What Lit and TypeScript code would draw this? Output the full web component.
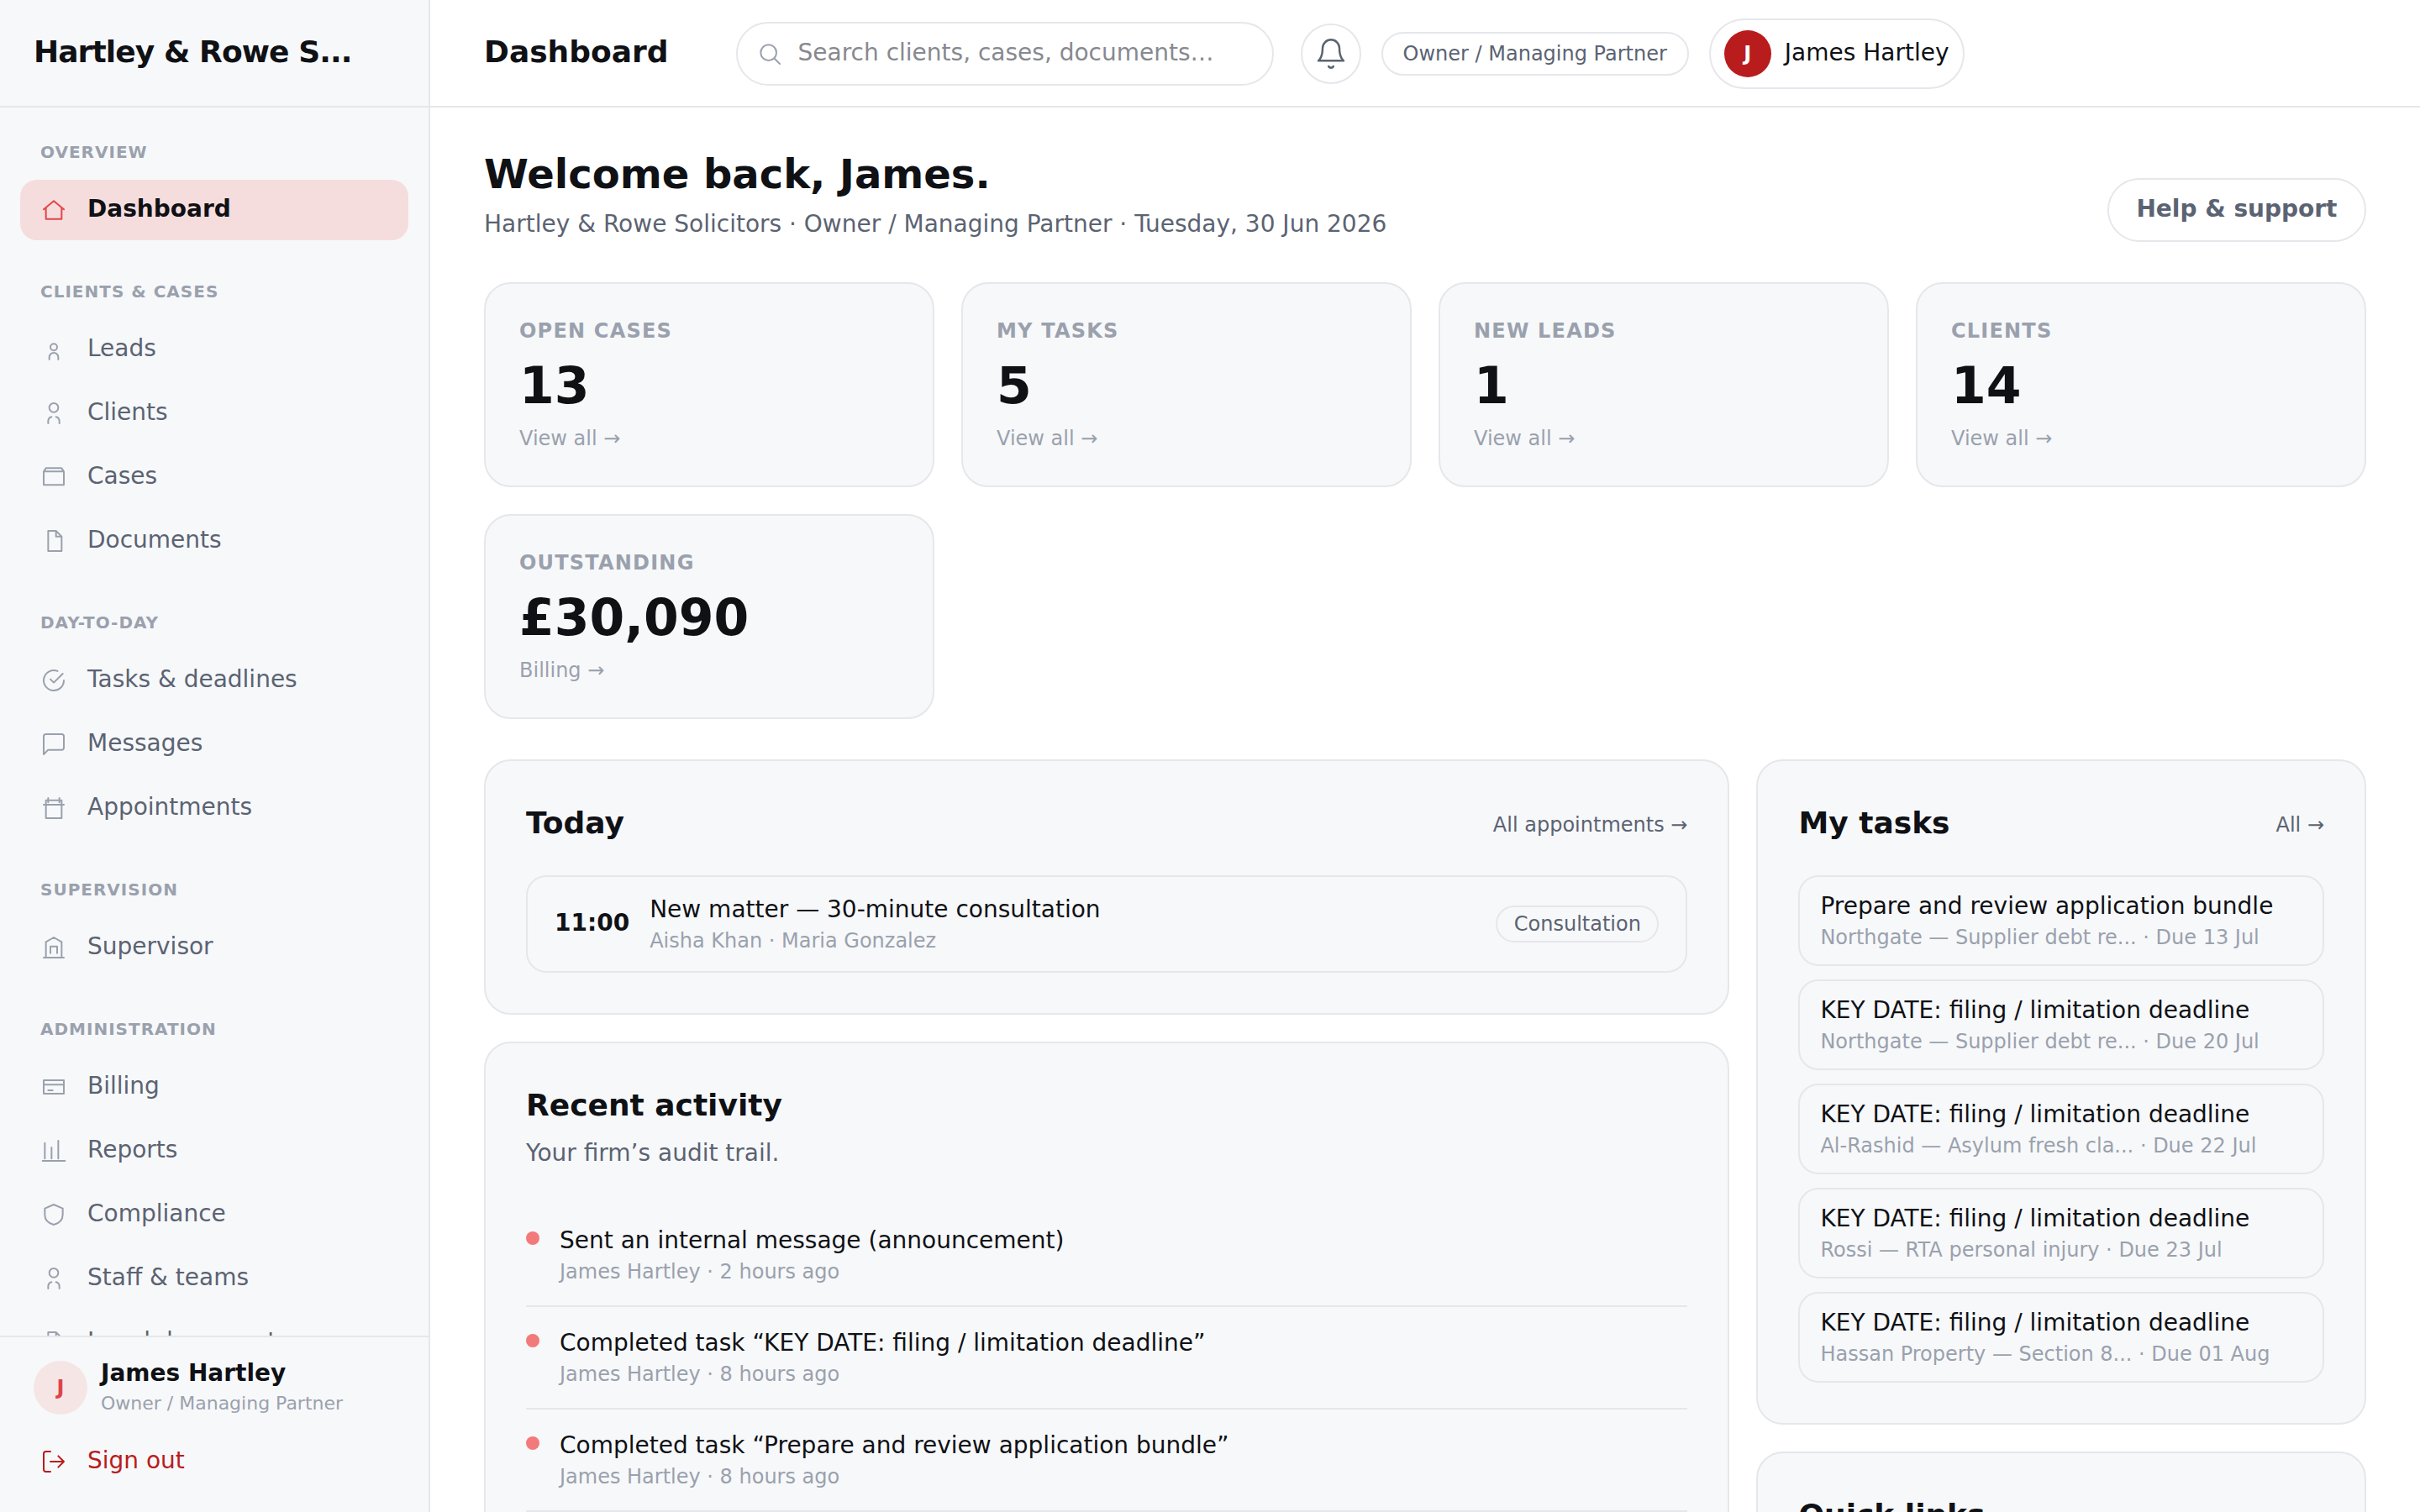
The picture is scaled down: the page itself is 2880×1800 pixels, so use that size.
import { LitElement, html, css, svg, nothing } from 'lit';
import { customElement, property } from 'lit/decorators.js';
import { classMap } from 'lit/directives/class-map.js';

const icons: Record<string, unknown> = {
  home: svg`<path d="M3 11.5 12 4l9 7.5M5 10v10h14V10"/>`,
  lead: svg`<circle cx="12" cy="10" r="3"/><path d="M8 21v-2a4 4 0 0 1 8 0v2"/>`,
  people: svg`<circle cx="12" cy="7" r="4"/><path d="M7 21v-2a4 4 0 0 1 3-3.87M17 21v-2a4 4 0 0 0-3-3.87"/>`,
  box: svg`<path d="M3 7h18v12H3zM3 7l2-3h14l2 3"/>`,
  file: svg`<path d="M14 3H7v18h12V8zM14 3v5h5"/>`,
  check: svg`<path d="m9 11 3 3 8-8M21 12a9 9 0 1 1-5.6-8.3"/>`,
  message: svg`<path d="M21 15a2 2 0 0 1-2 2H7l-4 4V5a2 2 0 0 1 2-2h14a2 2 0 0 1 2 2z"/>`,
  calendar: svg`<path d="M5 5h14v16H5zM3 9h18M7 3v4M17 3v4"/>`,
  building: svg`<path d="M3 21h18M5 21V7l7-4 7 4v14M9 17v-6h6v6"/>`,
  card: svg`<path d="M3 6h18v12H3zM3 10h18M7 15h4"/>`,
  chart: svg`<path d="M2 21h20M4 19V5M10 19V9M16 19V3"/>`,
  shield: svg`<path d="m12 3 8 3.5V12c0 5-3.5 7.8-8 9-4.5-1.2-8-4-8-9V6.5z"/>`,
  logout: svg`<path d="M9 21H5a2 2 0 0 1-2-2V5a2 2 0 0 1 2-2h4M16 17l5-5-5-5M21 12H9"/>`,
  search: svg`<circle cx="11" cy="11" r="7"/><path d="m21 21-4.5-4.5"/>`,
  bell: svg`<path d="M18 8a6 6 0 0 0-12 0c0 7-3 9-3 9h18s-3-2-3-9M13.73 21a2 2 0 0 1-3.46 0"/>`,
};

const navGroups = [
  { label: 'Overview', items: [['home', 'Dashboard']] },
  { label: 'Clients & Cases', items: [['lead', 'Leads'], ['people', 'Clients'], ['box', 'Cases'], ['file', 'Documents']] },
  { label: 'Day-to-day', items: [['check', 'Tasks & deadlines'], ['message', 'Messages'], ['calendar', 'Appointments']] },
  { label: 'Supervision', items: [['building', 'Supervisor']] },
  {
    label: 'Administration',
    items: [['card', 'Billing'], ['chart', 'Reports'], ['shield', 'Compliance'], ['people', 'Staff & teams'], ['file', 'Legal documents']],
  },
];

const stats = [
  { label: 'Open cases', value: '13', link: 'View all →' },
  { label: 'My tasks', value: '5', link: 'View all →' },
  { label: 'New leads', value: '1', link: 'View all →' },
  { label: 'Clients', value: '14', link: 'View all →' },
  { label: 'Outstanding', value: '£30,090', link: 'Billing →' },
];

const activity = [
  { title: 'Sent an internal message (announcement)', meta: 'James Hartley · 2 hours ago' },
  { title: 'Completed task “KEY DATE: filing / limitation deadline”', meta: 'James Hartley · 8 hours ago' },
  { title: 'Completed task “Prepare and review application bundle”', meta: 'James Hartley · 8 hours ago' },
];

const tasks = [
  { title: 'Prepare and review application bundle', meta: 'Northgate — Supplier debt re... · Due 13 Jul' },
  { title: 'KEY DATE: filing / limitation deadline', meta: 'Northgate — Supplier debt re... · Due 20 Jul' },
  { title: 'KEY DATE: filing / limitation deadline', meta: 'Al-Rashid — Asylum fresh cla... · Due 22 Jul' },
  { title: 'KEY DATE: filing / limitation deadline', meta: 'Rossi — RTA personal injury · Due 23 Jul' },
  { title: 'KEY DATE: filing / limitation deadline', meta: 'Hassan Property — Section 8... · Due 01 Aug' },
];

@customElement('line-icon')
export class LineIcon extends LitElement {
  @property() name = '';

  static styles = css`
    :host {
      display: block;
      flex: none;
      width: 32px;
      height: 32px;
    }

    svg {
      display: block;
      width: 100%;
      height: 100%;
      fill: none;
      stroke: currentColor;
      stroke-width: 1.5;
      stroke-linecap: round;
      stroke-linejoin: round;
    }
  `;

  render() {
    return html`<svg viewBox="0 0 24 24">${icons[this.name]}</svg>`;
  }
}

@customElement('side-nav')
export class SideNav extends LitElement {
  @property() active = 'Dashboard';

  static styles = css`
    :host {
      display: flex;
      flex-direction: column;
      box-sizing: border-box;
      height: 100%;
      min-height: 0;
      background: var(--surface);
      border-right: 2px solid var(--line);
    }

    .brand {
      flex: none;
      box-sizing: border-box;
      height: 128px;
      padding: 0 40px 4px;
      display: flex;
      align-items: center;
      border-bottom: 2px solid var(--line);
      font-size: 36px;
      font-weight: 700;
      letter-spacing: -0.025em;
      white-space: nowrap;
    }

    .nav {
      flex: 1;
      min-height: 0;
      overflow: hidden;
      padding: 24px 24px 0;
    }

    .group {
      margin-bottom: 32px;
    }

    .label {
      padding: 14px 24px 18px;
      line-height: 30px;
      font-size: 20px;
      font-weight: 700;
      letter-spacing: 0.05em;
      text-transform: uppercase;
      color: var(--muted);
    }

    .item {
      display: flex;
      align-items: center;
      gap: 24px;
      height: 72px;
      padding: 0 24px;
      margin-bottom: 4px;
      border-radius: 20px;
      color: var(--soft);
    }

    .item:last-child {
      margin-bottom: 0;
    }

    .item line-icon {
      color: var(--muted);
    }

    .text {
      padding-bottom: 3px;
      white-space: nowrap;
    }

    .item.active {
      background: #f6dddd;
      color: var(--ink);
      font-weight: 700;
    }

    .item.active line-icon {
      color: #e34548;
    }

    .item.danger,
    .item.danger line-icon {
      color: var(--brand);
    }

    .footer {
      flex: none;
      padding: 28px 24px 24px;
      border-top: 2px solid var(--line);
    }

    .user {
      display: flex;
      align-items: center;
      gap: 16px;
      height: 64px;
      padding: 0 16px;
      margin-bottom: 20px;
    }

    .avatar {
      display: flex;
      align-items: center;
      justify-content: center;
      width: 64px;
      height: 64px;
      border-radius: 50%;
      background: #f5e5e5;
      color: #e04347;
      font-size: 24px;
      font-weight: 700;
    }

    .who {
      padding-bottom: 3px;
    }

    .name {
      font-weight: 700;
      line-height: 40px;
    }

    .role {
      font-size: 22px;
      line-height: 32px;
      color: var(--muted);
    }
  `;

  render() {
    return html`
      <div class="brand">Hartley &amp; Rowe S...</div>
      <nav class="nav">
        ${navGroups.map(
          (group) => html`
            <div class="group">
              <div class="label">${group.label}</div>
              ${group.items.map(
                ([icon, text]) => html`
                  <div class=${classMap({ item: true, active: text === this.active })}>
                    <line-icon name=${icon}></line-icon>
                    <span class="text">${text}</span>
                  </div>
                `
              )}
            </div>
          `
        )}
      </nav>
      <div class="footer">
        <div class="user">
          <div class="avatar">J</div>
          <div class="who">
            <div class="name">James Hartley</div>
            <div class="role">Owner / Managing Partner</div>
          </div>
        </div>
        <div class="item danger">
          <line-icon name="logout"></line-icon>
          <span class="text">Sign out</span>
        </div>
      </div>
    `;
  }
}

@customElement('top-bar')
export class TopBar extends LitElement {
  static styles = css`
    :host {
      display: flex;
      align-items: center;
      box-sizing: border-box;
      height: 128px;
      padding: 0 64px;
      border-bottom: 2px solid var(--line);
      white-space: nowrap;
    }

    .title {
      margin-right: 80px;
      padding-bottom: 4px;
      font-size: 36px;
      font-weight: 700;
    }

    .search,
    .bell,
    .pill,
    .account {
      display: flex;
      align-items: center;
      box-sizing: border-box;
      border: 2px solid var(--line);
      border-radius: 999px;
      margin-top: 2px;
    }

    .search {
      width: 640px;
      height: 76px;
      gap: 18px;
      padding: 0 22px;
      color: var(--muted);
    }

    .placeholder {
      padding-bottom: 3px;
      color: #87898f;
    }

    .bell {
      justify-content: center;
      width: 72px;
      height: 72px;
      margin-left: 32px;
      color: var(--soft);
    }

    .bell line-icon {
      width: 40px;
      height: 40px;
    }

    .pill {
      height: 52px;
      padding: 0 24px;
      margin-left: 24px;
      font-size: 24px;
      color: var(--soft);
    }

    .account {
      height: 84px;
      padding: 0 16px;
      margin-left: 24px;
      gap: 16px;
    }

    .avatar {
      display: flex;
      align-items: center;
      justify-content: center;
      width: 56px;
      height: 56px;
      border-radius: 50%;
      background: var(--brand);
      color: #fff;
      font-size: 24px;
      font-weight: 700;
    }

    .name {
      padding-bottom: 3px;
    }
  `;

  render() {
    return html`
      <div class="title">Dashboard</div>
      <div class="search">
        <line-icon name="search"></line-icon>
        <span class="placeholder">Search clients, cases, documents…</span>
      </div>
      <div class="bell"><line-icon name="bell"></line-icon></div>
      <div class="pill">Owner / Managing Partner</div>
      <div class="account">
        <div class="avatar">J</div>
        <span class="name">James Hartley</span>
      </div>
    `;
  }
}

@customElement('panel-card')
export class PanelCard extends LitElement {
  @property() heading = '';
  @property() link = '';
  @property() sub = '';

  static styles = css`
    :host {
      display: block;
      padding: 48px;
      background: var(--surface);
      border: 2px solid var(--line);
      border-radius: 32px;
    }

    .head {
      display: flex;
      justify-content: space-between;
      align-items: flex-start;
      margin-bottom: 34px;
    }

    h2 {
      margin: 0;
      font-size: 36px;
      line-height: 51px;
      font-weight: 700;
    }

    .link {
      margin-top: 3px;
      font-size: 24px;
      line-height: 51px;
      color: var(--soft);
    }

    .sub {
      margin: 12px 0 7px;
      line-height: 40px;
      color: var(--soft);
    }
  `;

  render() {
    return html`
      <div class="head">
        <div>
          <h2>${this.heading}</h2>
          ${this.sub ? html`<p class="sub">${this.sub}</p>` : nothing}
        </div>
        ${this.link ? html`<span class="link">${this.link}</span>` : nothing}
      </div>
      <slot></slot>
    `;
  }
}

@customElement('app-root')
export class AppRoot extends LitElement {
  static styles = css`
    :host {
      --ink: #0f1115;
      --soft: #5b6372;
      --muted: #9aa1ad;
      --line: #e5e7eb;
      --surface: #f7f8fa;
      --brand: #b91c1c;
      display: grid;
      grid-template-columns: 512px 1fr;
      height: 100vh;
      overflow: hidden;
      background: #fff;
      color: var(--ink);
      font-family: 'DejaVu Sans', sans-serif;
      font-size: 28px;
    }

    .main {
      min-width: 0;
      height: 100vh;
      overflow: hidden;
    }

    .content {
      padding: 48px 64px;
    }

    .welcome {
      display: flex;
      justify-content: space-between;
      align-items: flex-end;
      margin-bottom: 48px;
    }

    h1 {
      margin: 0;
      font-size: 48px;
      line-height: 63px;
      font-weight: 700;
    }

    .context {
      margin: 7px 0 1px;
      line-height: 41px;
      color: var(--soft);
    }

    .help {
      display: flex;
      align-items: center;
      box-sizing: border-box;
      height: 76px;
      padding: 0 32.5px 3px;
      border: 2px solid var(--line);
      border-radius: 999px;
      font-weight: 700;
      color: var(--soft);
    }

    .stats {
      display: grid;
      grid-template-columns: repeat(4, 1fr);
      gap: 32px;
      margin-bottom: 48px;
    }

    .stat {
      padding: 38px 40px;
      background: var(--surface);
      border: 2px solid var(--line);
      border-radius: 32px;
      font-size: 24px;
      line-height: 36px;
      color: var(--muted);
    }

    .stat-label {
      font-weight: 700;
      letter-spacing: 0.05em;
      text-transform: uppercase;
    }

    .stat-value {
      margin: 11px 0 9px;
      font-size: 60px;
      line-height: 72px;
      font-weight: 700;
      color: var(--ink);
    }

    .columns {
      display: grid;
      grid-template-columns: 1fr 725.6px;
      gap: 32px;
      align-items: start;
    }

    .column {
      display: grid;
      gap: 32px;
    }

    .appointment {
      display: flex;
      align-items: center;
      gap: 24px;
      padding: 18px 32px 19px;
      border: 2px solid var(--line);
      border-radius: 24px;
    }

    .time {
      padding-bottom: 3px;
      font-weight: 700;
    }

    .details {
      flex: 1;
    }

    .line-title {
      line-height: 41px;
    }

    .line-meta {
      font-size: 24px;
      line-height: 34px;
      color: var(--muted);
    }

    .tag {
      margin-top: 1px;
      padding: 0 19.5px;
      border: 2px solid var(--line);
      border-radius: 999px;
      font-size: 24px;
      line-height: 40px;
      color: var(--soft);
    }

    .event {
      display: flex;
      align-items: flex-start;
      gap: 24px;
      padding: 22px 0 23px;
      border-bottom: 2px solid var(--line);
    }

    .dot {
      width: 16px;
      height: 16px;
      margin-top: 10px;
      border-radius: 50%;
      background: #f27a7a;
    }

    .tasks {
      display: grid;
      gap: 16px;
    }

    .task {
      padding: 14px 24px 15px;
      border: 2px solid var(--line);
      border-radius: 24px;
    }
  `;

  render() {
    return html`
      <side-nav></side-nav>
      <div class="main">
        <top-bar></top-bar>
        <div class="content">
          <div class="welcome">
            <div>
              <h1>Welcome back, James.</h1>
              <p class="context">Hartley &amp; Rowe Solicitors · Owner / Managing Partner · Tuesday, 30 Jun 2026</p>
            </div>
            <div class="help">Help &amp; support</div>
          </div>

          <div class="stats">
            ${stats.map(
              (stat) => html`
                <div class="stat">
                  <div class="stat-label">${stat.label}</div>
                  <div class="stat-value">${stat.value}</div>
                  <div>${stat.link}</div>
                </div>
              `
            )}
          </div>

          <div class="columns">
            <div class="column">
              <panel-card heading="Today" link="All appointments →">
                <div class="appointment">
                  <div class="time">11:00</div>
                  <div class="details">
                    <div class="line-title">New matter — 30-minute consultation</div>
                    <div class="line-meta">Aisha Khan · Maria Gonzalez</div>
                  </div>
                  <div class="tag">Consultation</div>
                </div>
              </panel-card>
              <panel-card heading="Recent activity" sub="Your firm’s audit trail.">
                ${activity.map(
                  (event) => html`
                    <div class="event">
                      <div class="dot"></div>
                      <div>
                        <div class="line-title">${event.title}</div>
                        <div class="line-meta">${event.meta}</div>
                      </div>
                    </div>
                  `
                )}
              </panel-card>
            </div>
            <div class="column">
              <panel-card heading="My tasks" link="All →">
                <div class="tasks">
                  ${tasks.map(
                    (task) => html`
                      <div class="task">
                        <div class="line-title">${task.title}</div>
                        <div class="line-meta">${task.meta}</div>
                      </div>
                    `
                  )}
                </div>
              </panel-card>
              <panel-card heading="Quick links"></panel-card>
            </div>
          </div>
        </div>
      </div>
    `;
  }
}
